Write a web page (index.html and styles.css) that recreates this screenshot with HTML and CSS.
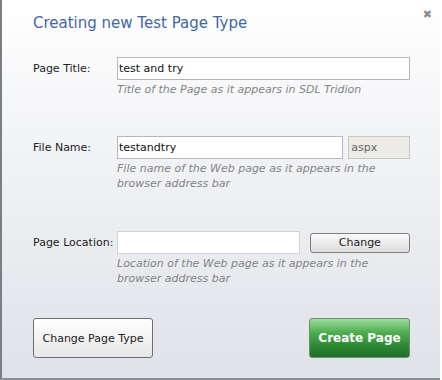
FILE: index.html
```html
<!DOCTYPE html>
<html lang="en">
<head>
  <meta charset="UTF-8" />
  <title>Creating new Test Page Type</title>
  <link rel="stylesheet" href="styles.css">
</head>
<body>
  <div class="dialog">
    <span class="close">&#x2716;</span>
    <h1>Creating new Test Page Type</h1>

    <div class="row first">
      <label>Page Title:</label>
      <div class="field">
        <div class="line">
          <input type="text" class="wide" value="test and try" />
        </div>
        <p class="hint">Title of the Page as it appears in SDL Tridion</p>
      </div>
    </div>

    <div class="row second">
      <label>File Name:</label>
      <div class="field">
        <div class="line">
          <input type="text" class="name" value="testandtry" />
          <span class="ext">aspx</span>
        </div>
        <p class="hint">File name of the Web page as it appears in the<br>browser address bar</p>
      </div>
    </div>

    <div class="row third">
      <label>Page Location:</label>
      <div class="field">
        <div class="line">
          <input type="text" class="location" value="" />
          <button class="small">Change</button>
        </div>
        <p class="hint">Location of the Web page as it appears in the<br>browser address bar</p>
      </div>
    </div>

    <div class="actions">
      <button class="type">Change Page Type</button>
      <button class="create">Create Page</button>
    </div>
  </div>
</body>
</html>
```

FILE: styles.css
```css
body {
  margin: 0;
  font-family: "DejaVu Sans", Verdana, sans-serif;
  font-size: 11px;
  color: #222;
  background: #fff;
}
.dialog {
  position: relative;
  width: 438px;
  height: 378px;
  border-left: 2px solid #7a7f86;
  border-bottom: 2px solid #8a8f96;
  background: linear-gradient(#ffffff 0%, #f3f4f6 35%, #dfe2e8 100%);
}
.close {
  position: absolute;
  top: 8px;
  right: 8px;
  color: #8c8c8c;
  font-size: 11px;
}
h1 {
  margin: 0;
  padding: 14px 0 0 31px;
  font-size: 15px;
  font-weight: normal;
  color: #4267a8;
  height: 43px;
}
.row {
  display: grid;
  grid-template-columns: 84px 293px;
  padding-left: 31px;
}
.row label {
  padding-top: 5px;
}
.first { margin-top: 0; }
.second { margin-top: 39px; }
.third { margin-top: 40px; }
.line {
  display: flex;
  align-items: center;
  gap: 5px;
  height: 23px;
}
input {
  box-sizing: border-box;
  height: 23px;
  border: 1px solid #b4b8be;
  background: #fff;
  font-family: "DejaVu Sans", Verdana, sans-serif;
  font-size: 11px;
  padding: 0 1px;
  color: #111;
  margin: 0;
}
input.wide { width: 293px; }
input.name { width: 227px; }
input.location { width: 184px; border-color: #d0d3d8; }
.ext {
  box-sizing: border-box;
  width: 62px;
  height: 23px;
  line-height: 21px;
  border: 1px solid #c9c8c2;
  background: #ecebe5;
  color: #666;
  padding-left: 2px;
}
.hint {
  margin: 2px 0 0;
  font-style: italic;
  color: #848484;
  line-height: 15px;
}
button {
  font-family: "DejaVu Sans", Verdana, sans-serif;
  font-size: 11px;
  cursor: pointer;
}
.small {
  margin-left: 5px;
  width: 101px;
  height: 20px;
  border: 1px solid #7f7f7f;
  border-radius: 3px;
  background: linear-gradient(#fbfbfb, #dcdcdc);
  color: #222;
}
.actions {
  display: flex;
  justify-content: space-between;
  padding: 32px 30px 0 31px;
}
.type {
  width: 120px;
  height: 40px;
  border: 1px solid #6f6f6f;
  border-radius: 3px;
  background: linear-gradient(#ffffff, #e6e6e6);
  color: #222;
}
.create {
  width: 101px;
  height: 40px;
  border: 1px solid #6d8f6d;
  border-radius: 3px;
  background: linear-gradient(#9ddc9d 0%, #4fae4f 35%, #2e8a35 70%, #1f6e2a 100%);
  color: #fff;
  font-weight: bold;
  font-size: 12px;
}
```
